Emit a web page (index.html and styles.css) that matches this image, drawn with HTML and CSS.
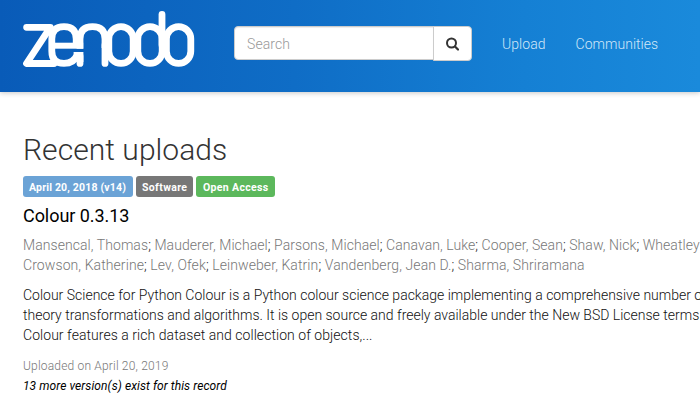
FILE: index.html
```html
<!DOCTYPE html>
<html lang="en">
<head>
<meta charset="utf-8">
<title>Zenodo</title>
<link rel="stylesheet" href="styles.css">
</head>
<body>
<header class="navbar">
  <a class="brand" aria-label="Zenodo">
    <svg class="logo" viewBox="23 10 172 58" width="172" height="58">
      <g fill="none" stroke="#fff" stroke-width="6.800" stroke-linecap="round" stroke-linejoin="round">
        <path d="M26.600 27.300H50.300L26.500 63.500H54"/>
        <g stroke-linecap="butt"><path d="M52 45.700H83.200" stroke-width="6"/><path d="M77 52V55Q74 63.400 64 63.400Q51.800 63.400 51.800 51V39Q51.800 26.700 64 26.700T76.200 39V46"/><path d="M80 48.700V39Q80 26.700 92.500 26.700T105 39V48"/><path d="M80 62V52"/></g>
        <path d="M80 63.400V56M105 63.400V45"/>
        <rect x="108.800" y="26.700" width="24.400" height="36.700" rx="12.200"/>
        <rect x="137.800" y="26.700" width="24.400" height="36.700" rx="12.200"/>
        <path d="M162 14.400V45"/>
        <rect x="166.400" y="26.700" width="24.400" height="36.700" rx="12.200"/>
      </g>
    </svg>
  </a>
  <form class="search">
    <input class="search-input" type="text" placeholder="Search">
    <button class="search-button" type="button" aria-label="Search">
      <svg width="13" height="14" viewBox="0 0 13 14"><circle cx="5.500" cy="6" r="4.500" fill="none" stroke="#333" stroke-width="2"/><path d="M9 9.500L12 12.500" stroke="#333" stroke-width="2.200" stroke-linecap="round"/></svg>
    </button>
  </form>
  <nav class="links"><a>Upload</a><a>Communities</a></nav>
</header>
<main class="content">
  <h2 class="heading">Recent uploads</h2>
  <div class="labels"><span class="label date">April 20, 2018 (v14)</span> <span class="label type">Software</span> <span class="label access">Open Access</span></div>
  <h4 class="title">Colour 0.3.13</h4>
  <p class="authors"><a>Mansencal, Thomas</a>; <a>Mauderer, Michael</a>; <a>Parsons, Michael</a>; <a>Canavan, Luke</a>; <a>Cooper, Sean</a>; <a>Shaw, Nick</a>; <a>Wheatley</a><br><span class="authors-rest"><a>Crowson, Katherine</a>; <a>Lev, Ofek</a>; <a>Leinweber, Katrin</a>; <a>Vandenberg, Jean D.</a>; <a>Sharma, Shriramana</a></span></p>
  <p class="description">Colour Science for Python Colour is a Python colour science package implementing a comprehensive number of<br>theory transformations and algorithms. It is open source and freely available under the New BSD License terms.<br><span class="description-end">Colour features a rich dataset and collection of objects,...</span></p>
  <p class="uploaded">Uploaded on April 20, 2019</p>
  <p class="versions">13 more version(s) exist for this record</p>
</main>
</body>
</html>
```
FILE: styles.css
```css
* { box-sizing: border-box; }
body {
  margin: 0;
  overflow: hidden;
  background: #fff;
  color: #111;
  font: 300 14px/20px Roboto, sans-serif;
}
.navbar {
  display: flex;
  align-items: flex-start;
  height: 92px;
  padding-left: 23px;
  background: linear-gradient(90deg, #095bb8, #0f6dc6 42%, #1580d4 75%, #1a8adb);
  box-shadow: 0 1px 5px rgba(0, 0, 0, .22);
}
.logo { display: block; margin-top: 10px; }
.search { display: flex; align-items: flex-start; margin: 26px 0 0 39px; }
.search-input {
  width: 200px;
  height: 34px;
  padding: 7px 12px 5px;
  border: 1px solid #ccc;
  border-radius: 4px 0 0 4px;
  background: #fff;
  font: inherit;
  letter-spacing: .08px;
  box-shadow: inset 0 1px 1px rgba(0, 0, 0, .075);
}
.search-input::placeholder { color: #999; opacity: 1; }
.search-button {
  display: flex;
  align-items: center;
  justify-content: center;
  width: 39px;
  height: 35px;
  margin-left: -1px;
  padding: 0;
  border: 1px solid #ccc;
  border-radius: 0 4px 4px 0;
  background: #fff;
}
.links { display: flex; gap: 30px; margin: 34px 0 0 30px; color: #d1e7f8; letter-spacing: .04px; }
.content { width: 677px; margin-left: 23px; padding-top: 41px; white-space: nowrap; }
.heading { margin: 0 0 10px; color: #333; font-size: 30px; font-weight: 300; line-height: 33px; letter-spacing: .05px; }
.labels { display: flex; gap: 3px; }
.label {
  height: 21px;
  padding: 1px 6px 0;
  border-radius: 3px;
  color: #fff;
  font-size: 10.5px;
  font-weight: 700;
  line-height: 21px;
}
.date { width: 110px; background: #6ba3d6; letter-spacing: .18px; }
.type { width: 57px; background: #777; letter-spacing: .36px; }
.access { width: 79px; padding-left: 7px; background: #5cb85c; letter-spacing: .34px; }
.title { margin: 9px 0; color: #000; font-size: 18px; font-weight: 400; line-height: 20px; letter-spacing: -.06px; }
.authors, .description { margin: 0 0 10px; }
.authors { letter-spacing: .068px; }
.authors-rest { letter-spacing: .09px; }
.authors a { color: #777; }
.description-end { letter-spacing: .05px; }
.uploaded { margin: 11px 0 0; color: #777; font-size: 12px; letter-spacing: .18px; }
.versions { margin: 0; color: #000; font-size: 12px; font-style: italic; font-weight: 400; letter-spacing: .08px; }
```
